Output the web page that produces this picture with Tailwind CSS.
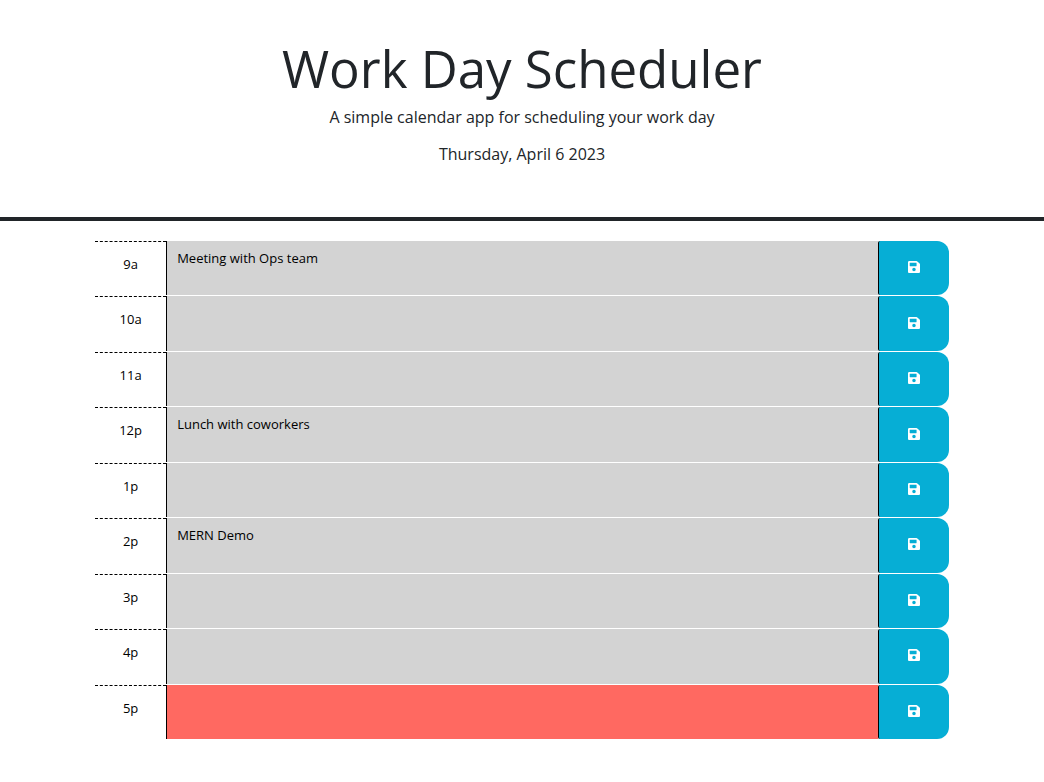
<!DOCTYPE html>
<html lang="en">
<head>
<meta charset="utf-8">
<meta name="viewport" content="width=device-width, initial-scale=1">
<title>Work Day Scheduler</title>
<script src="https://cdn.jsdelivr.net/npm/@tailwindcss/browser@4"></script>
</head>
<body class="bg-white font-['Open_Sans',sans-serif] text-base text-[#212529]">
<header class="border-b-4 border-[#212529] px-6 pt-9 pb-12 text-center">
  <h1 class="text-[51px] leading-[64px]">Work Day Scheduler</h1>
  <p class="mt-1 leading-[26px]">A simple calendar app for scheduling your work day</p>
  <p class="mt-3 mb-[3px] leading-6">Thursday, April 6 2023</p>
</header>
<main class="px-[95px] pt-5">
  <div id="schedule" class="grid min-h-[499px] auto-rows-fr text-[13px] text-black"></div>
</main>
<template id="row">
  <div class="grid grid-cols-12">
    <label class="border-t border-dashed border-black pt-3 text-center leading-5"></label>
    <textarea rows="1" class="col-span-10 mb-px block resize-none border-l border-black px-2.5 py-[7px] leading-5 outline-none"></textarea>
    <button type="button" class="mb-px flex items-center justify-center rounded-l-xs rounded-r-xl border-l border-black bg-[#06aed5] pb-0.5 text-white">
      <svg class="h-[14px] w-3" viewBox="0 0 448 512" fill="currentColor" aria-hidden="true"><path d="M433.941 129.941l-83.882-83.882A48 48 0 0 0 316.118 32H48C21.49 32 0 53.49 0 80v352c0 26.51 21.49 48 48 48h352c26.51 0 48-21.49 48-48V163.882a48 48 0 0 0-14.059-33.941zM224 416c-35.346 0-64-28.654-64-64 0-35.346 28.654-64 64-64s64 28.654 64 64c0 35.346-28.654 64-64 64zm96-304.52V212c0 6.627-5.373 12-12 12H76c-6.627 0-12-5.373-12-12V108c0-6.627 5.373-12 12-12h228.52c3.183 0 6.235 1.264 8.485 3.515l3.48 3.48A11.996 11.996 0 0 1 320 111.48z"/></svg>
    </button>
  </div>
</template>
<script>
const hours = [
  ['9a', 'Meeting with Ops team'], ['10a', ''], ['11a', ''],
  ['12p', 'Lunch with coworkers'], ['1p', ''], ['2p', 'MERN Demo'],
  ['3p', ''], ['4p', ''], ['5p', '']
];
const current = '5p';
for (const [hour, text] of hours) {
  const row = document.getElementById('row').content.cloneNode(true);
  const label = row.querySelector('label');
  const area = row.querySelector('textarea');
  label.textContent = hour;
  label.htmlFor = area.id = 'hour-' + hour;
  area.value = text;
  area.classList.add(hour === current ? 'bg-[#ff6961]' : 'bg-[#d3d3d3]');
  row.querySelector('button').setAttribute('aria-label', 'Save ' + hour);
  document.getElementById('schedule').append(row);
}
</script>
</body>
</html>
